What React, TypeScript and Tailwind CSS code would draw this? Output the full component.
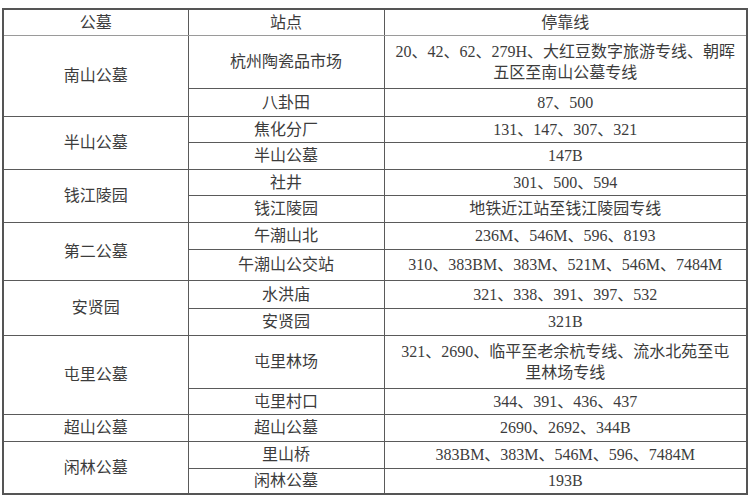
const groups: { name: string; stops: { stop: string; lines: string[]; h: string }[] }[] = [
  {
    name: "南山公墓",
    stops: [
      { stop: "杭州陶瓷品市场", lines: ["20、42、62、279H、大红豆数字旅游专线、朝晖", "五区至南山公墓专线"], h: "h-[53px]" },
      { stop: "八卦田", lines: ["87、500"], h: "h-[28px]" },
    ],
  },
  {
    name: "半山公墓",
    stops: [
      { stop: "焦化分厂", lines: ["131、147、307、321"], h: "h-[26px]" },
      { stop: "半山公墓", lines: ["147B"], h: "h-[27px]" },
    ],
  },
  {
    name: "钱江陵园",
    stops: [
      { stop: "社井", lines: ["301、500、594"], h: "h-[26px]" },
      { stop: "钱江陵园", lines: ["地铁近江站至钱江陵园专线"], h: "h-[27px]" },
    ],
  },
  {
    name: "第二公墓",
    stops: [
      { stop: "午潮山北", lines: ["236M、546M、596、8193"], h: "h-[27px]" },
      { stop: "午潮山公交站", lines: ["310、383BM、383M、521M、546M、7484M"], h: "h-[31px]" },
    ],
  },
  {
    name: "安贤园",
    stops: [
      { stop: "水洪庙", lines: ["321、338、391、397、532"], h: "h-[28px]" },
      { stop: "安贤园", lines: ["321B"], h: "h-[27px]" },
    ],
  },
  {
    name: "屯里公墓",
    stops: [
      { stop: "屯里林场", lines: ["321、2690、临平至老余杭专线、流水北苑至屯", "里林场专线"], h: "h-[53px]" },
      { stop: "屯里村口", lines: ["344、391、436、437"], h: "h-[26px]" },
    ],
  },
  {
    name: "超山公墓",
    stops: [{ stop: "超山公墓", lines: ["2690、2692、344B"], h: "h-[27px]" }],
  },
  {
    name: "闲林公墓",
    stops: [
      { stop: "里山桥", lines: ["383BM、383M、546M、596、7484M"], h: "h-[27px]" },
      { stop: "闲林公墓", lines: ["193B"], h: "h-[26px]" },
    ],
  },
]

const cell = "border border-[#5a5a5a] text-center align-middle p-0"

export default function App() {
  return (
    <div
      className="w-[750px] h-[500px] bg-white pt-[8px] pl-[2px] text-[16px] leading-[21px] text-[#3c3c3c]"
      style={{ fontFamily: '"Liberation Serif", "Noto Sans CJK SC", serif' }}
    >
      <table className="border-collapse table-fixed w-[744px] border-2 border-[#555]">
        <colgroup>
          <col className="w-[185px]" />
          <col className="w-[196px]" />
          <col className="w-[363px]" />
        </colgroup>
        <thead>
          <tr>
            <th className={`${cell} h-[26px] font-normal border-b-[#9a9a9a]`}>公墓</th>
            <th className={`${cell} h-[26px] font-normal border-b-[#9a9a9a]`}>站点</th>
            <th className={`${cell} h-[26px] font-normal border-b-[#9a9a9a]`}>停靠线</th>
          </tr>
        </thead>
        <tbody>
          {groups.map((g) =>
            g.stops.map((s, i) => (
              <tr key={g.name + s.stop}>
                {i === 0 && (
                  <td rowSpan={g.stops.length} className={cell}>
                    {g.name}
                  </td>
                )}
                <td className={`${cell} ${s.h}`}>{s.stop}</td>
                <td className={`${cell} ${s.h} whitespace-nowrap`}>
                  {s.lines.map((l, k) => (
                    <div key={k}>{l}</div>
                  ))}
                </td>
              </tr>
            ))
          )}
        </tbody>
      </table>
    </div>
  )
}
